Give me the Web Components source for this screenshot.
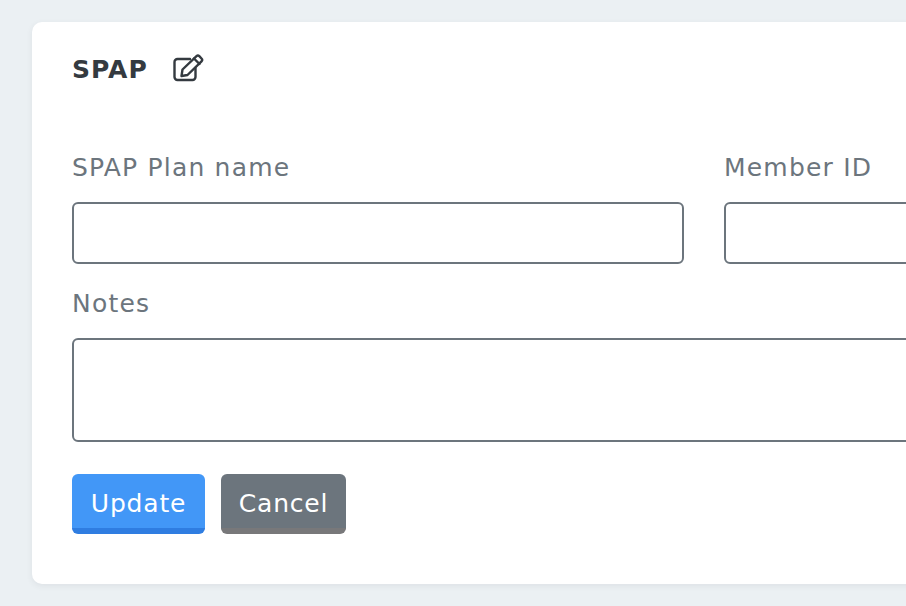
<!DOCTYPE html>
<html>
<head>
<meta charset="utf-8">
<style>
    html, body { margin: 0; height: 100%; overflow: hidden; }
    body {
        background: #ebf0f3;
        font-family: "DejaVu Sans", "Inter", sans-serif;
        color: #6c757d;
    }
</style>
</head>
<body>

<template id="plan-card-template">
    <style>
        :host {
            display: block;
            box-sizing: border-box;
            width: 1344px;
            height: 562px;
            margin: 22px 0 0 32px;
            padding: 29px 40px 0;
            background: #fff;
            border-radius: 10px;
            box-shadow: 0 2px 6px rgba(60, 70, 80, .08);
        }
        header {
            display: flex;
            align-items: center;
            gap: 24px;
            height: 36px;
            margin-bottom: 64px;
            font-size: 25px;
            font-weight: 700;
            letter-spacing: 1px;
            color: #343a40;
        }
        svg { display: block; margin-top: -3px; }
    </style>
    <header><slot name="title"></slot><svg width="32" height="28" viewBox="0 0 32 28" fill="none" stroke="#343a40" stroke-width="2.4" stroke-linejoin="round" stroke-linecap="round"><path d="M18 5H5.5A3 3 0 0 0 2.5 8v15a3 3 0 0 0 3 3h15a3 3 0 0 0 3-3V14"/><path d="M10.5 15.5 24.5 2.2a2 2 0 0 1 2.8 0l2.2 2.3a2 2 0 0 1 0 2.8L15.5 21l-6 1z"/><path d="M22 4.5l5.5 5.5"/></svg></header>
    <slot></slot>
</template>

<template id="form-row-template">
    <style>
        :host {
            display: grid;
            grid-template-columns: 612px 612px;
            column-gap: 40px;
        }
    </style>
    <slot></slot>
</template>

<template id="text-field-template">
    <style>
        :host { display: block; }
        label {
            display: block;
            height: 51px;
            font-size: 25px;
            line-height: 34px;
            letter-spacing: 1.2px;
            color: #6c757d;
        }
        .box {
            box-sizing: border-box;
            height: var(--box-height, 62px);
            border: 2px solid #6c757d;
            border-radius: 6px;
            background: #fff;
        }
    </style>
    <label></label>
    <div class="box"></div>
</template>

<template id="action-button-template">
    <style>
        :host {
            display: inline-flex;
            align-items: center;
            justify-content: center;
            box-sizing: border-box;
            height: 60px;
            padding: 4px 0 0;
            border-radius: 6px;
            border-bottom: 6px solid var(--edge, #2f7de1);
            background: var(--fill, #4297f7);
            color: #fff;
            font-size: 25px;
            letter-spacing: .8px;
        }
    </style>
    <slot></slot>
</template>

<plan-card>
    <span slot="title">SPAP</span>
    <form-row>
        <text-field label="SPAP Plan name"></text-field>
        <text-field label="Member ID"></text-field>
    </form-row>
    <text-field label="Notes" style="--box-height:104px; margin-top:23px"></text-field>
    <div style="display:flex; gap:16px; margin-top:32px">
        <action-button style="width:133px">Update</action-button>
        <action-button style="width:125px; --fill:#6c757d; --edge:#78787a">Cancel</action-button>
    </div>
</plan-card>

<script>
    function stamp(el, id) {
        let template = document.getElementById(id);
        let shadowRoot = el.attachShadow({mode: 'open'});
        shadowRoot.appendChild(template.content.cloneNode(true));
        return shadowRoot;
    }

    window.customElements.define('plan-card', class extends HTMLElement {
        constructor() {
            super();
            stamp(this, 'plan-card-template');
        }
    });

    window.customElements.define('form-row', class extends HTMLElement {
        constructor() {
            super();
            stamp(this, 'form-row-template');
        }
    });

    window.customElements.define('text-field', class extends HTMLElement {
        constructor() {
            super();
            stamp(this, 'text-field-template');
        }

        connectedCallback() {
            this.shadowRoot.querySelector('label').textContent = this.getAttribute('label');
        }
    });

    window.customElements.define('action-button', class extends HTMLElement {
        constructor() {
            super();
            stamp(this, 'action-button-template');
        }
    });
</script>
</body>
</html>
